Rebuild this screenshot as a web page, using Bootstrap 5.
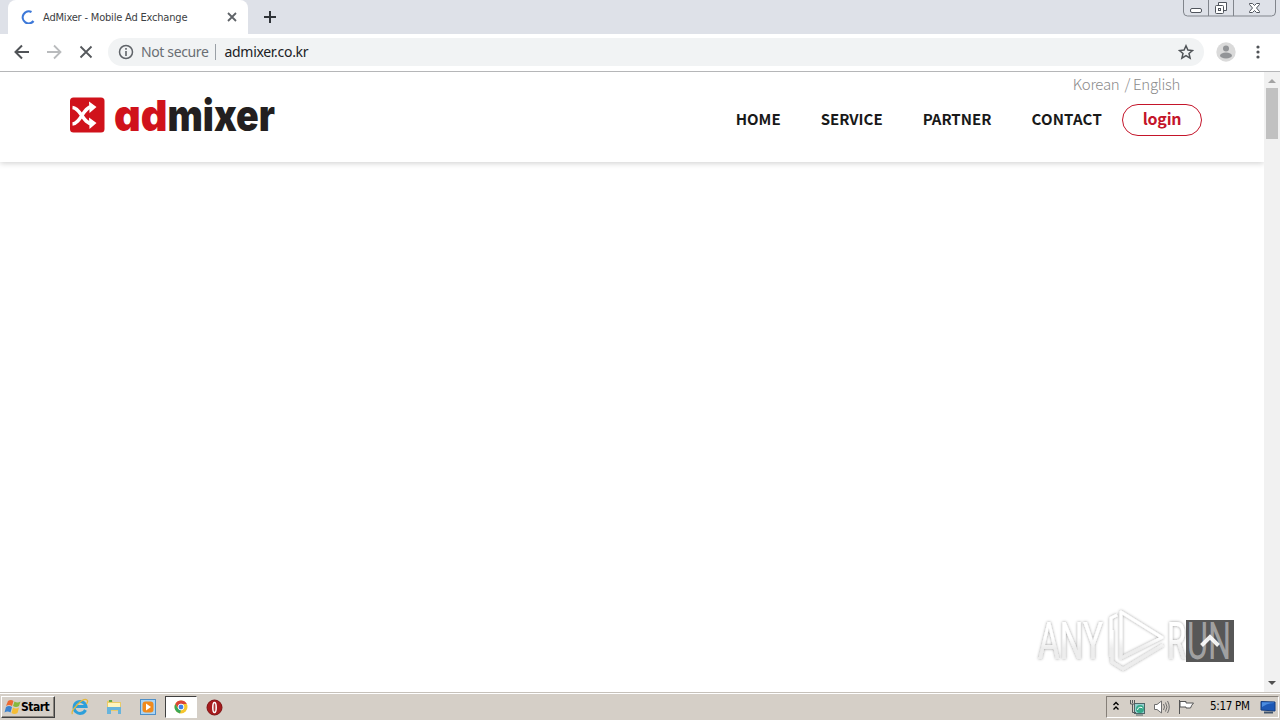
<!DOCTYPE html>
<html lang="en">
<head>
  <meta charset="UTF-8">
  <title>AdMixer - Mobile Ad Exchange</title>
  <meta name="viewport" content="width=device-width, initial-scale=1">
  <link href="https://cdn.jsdelivr.net/npm/bootstrap@5.3.3/dist/css/bootstrap.min.css" rel="stylesheet">
  <style>
    body { width: 1280px; height: 720px; overflow: hidden; background: #fff; font-family: "Noto Sans", sans-serif; line-height: 1; }
    svg { display: block; flex: none; }

    /* browser frame */
    .tab-strip { height: 34px; background: #dee1e8; }
    .browser-tab { width: 240px; height: 34px; margin-left: 8px; padding: 0 10px 0 13px; background: #fff; border-radius: 8px 8px 0 0; }
    .tab-title { font-family: "DejaVu Sans Condensed", "DejaVu Sans", sans-serif; font-stretch: condensed; font-size: 11px; letter-spacing: -.19px; color: #3c4043; margin-left: 8px; white-space: nowrap; }
    .new-tab { margin-left: 15px; }
    .win-buttons { margin-right: 4px; }
    .toolbar { height: 38px; border-bottom: 1px solid #b5b6b8; padding: 0 15px 2px 14px; }
    .nav-icon { margin-left: 16px; }
    .omnibox { width: 1096px; height: 28px; background: #f1f3f4; border-radius: 14px; margin-left: 14px; padding: 0 10px; font-size: 14px; }
    .not-secure { margin-left: 7px; color: #6a6e73; letter-spacing: -.37px; }
    .url-text { color: #202124; letter-spacing: -.3px; }
    .url-divider { width: 1px; height: 16px; background: #9aa0a6; margin: 0 8px 0 7px; }

    /* site */
    .viewport-row { height: 620px; }
    .site-header { height: 90px; padding: 0 62px 0 70px; background: #fff; box-shadow: 0 1px 6px rgba(0, 0, 0, .2); font-family: "Noto Sans CJK KR", sans-serif; }
    .site-header a { color: inherit; text-decoration: none; }
    .brand-logo { margin-top: 16px; }
    .lang-links { font-size: 15px; font-weight: 300; color: #8b8b8b; padding: 4px 22px 0 0; height: 32px; line-height: 16px; letter-spacing: -.3px; }
    .lang-links a:first-child { margin-right: 2px; }
    .main-menu { font-size: 15px; font-weight: 700; color: #191919; height: 32px; }
    .main-menu a { margin-right: 40px; padding-bottom: 4px; }
    .main-menu a:nth-child(4) { margin-right: 20px; letter-spacing: .2px; }
    .main-menu .login-btn { width: 80px; height: 32px; margin-right: 0; border: 1px solid #c4152a; border-radius: 16px; color: #c4152a; font-size: 16px; letter-spacing: -.2px; }
    .scroll-track { width: 16px; background: #f1f1f1; }
    .scroll-thumb { width: 12px; height: 51px; background: #c1c1c1; }
    .to-top { left: 1186px; top: 620px; width: 48px; height: 42px; background: #575757; }
    .watermark { left: 1030px; top: 600px; pointer-events: none; }

    /* taskbar */
    .taskbar { height: 28px; background: #d5cfc7; border-top: 1px solid #c6c1ba; box-shadow: inset 0 1px #fff; padding: 3px 1px 2px; font-family: "DejaVu Sans Condensed", "DejaVu Sans", sans-serif; color: #000; }
    .start-btn { width: 54px; height: 22px; padding: 0 0 0 2px; background: #d5cfc7; color: #000; border: 1px solid; border-color: #fff #404040 #404040 #fff; box-shadow: inset -1px -1px #8a857e; font-size: 12px; font-weight: 700; letter-spacing: -.5px; }
    .quick-icon { margin-left: 16px; }
    .task-active { width: 32px; height: 22px; margin: 0 9px 0 8px; background: #fff; border: 1px solid; border-color: #404040 #fff #fff #404040; }
    .tray { width: 173px; height: 22px; border: 1px solid; border-color: #857f78 #fff #fff #857f78; }
    .clock { font-size: 11.5px; letter-spacing: -.3px; margin: 0 10px 0 15px; white-space: nowrap; }
  </style>
</head>
<body>
  <div class="tab-strip d-flex">
    <div class="browser-tab d-flex align-items-center">
      <svg width="14" height="14" viewBox="0 0 14 14"><path d="M10.500 2A6 6 0 1 0 12.500 11" fill="none" stroke="#3c78d8" stroke-width="2.200"/></svg>
      <span class="tab-title">AdMixer - Mobile Ad Exchange</span>
      <svg class="ms-auto" width="12" height="12" viewBox="0 0 12 12"><path d="M2 2l8 8M10 2l-8 8" stroke="#5f6368" stroke-width="1.800"/></svg>
    </div>
    <svg class="new-tab align-self-center" width="14" height="14" viewBox="0 0 14 14"><path d="M7 1v12M1 7h12" stroke="#2f3338" stroke-width="2"/></svg>
    <svg class="win-buttons ms-auto" width="93" height="18" viewBox="0 0 93 18" fill="none" stroke="#81858c">
      <path d="M.5 0v12q0 4 4 4h84q4 0 4-4V0M25.500 0v16M50.500 0v16"/>
      <g stroke="#50555d">
        <rect x="7.500" y="8.500" width="11" height="4" rx="1.500" fill="#fff"/>
        <path d="M35.500 5V2.500h8v8H41" fill="#fff"/>
        <rect x="32.500" y="5.500" width="8" height="8" rx="1" fill="#fff"/>
        <rect x="35.500" y="8.500" width="2" height="2"/>
        <path d="M66.500 3.500h3l2 2 2-2h3v1l-3 3.500 3 3.500v1h-3l-2-2-2 2h-3v-1l3-3.500-3-3.500z" fill="#fff"/>
      </g>
    </svg>
  </div>

  <div class="toolbar d-flex align-items-center">
    <svg width="16" height="16" viewBox="0 0 16 16" fill="none" stroke="#505357" stroke-width="2"><path d="M15 8H2M8 1.500L1.500 8 8 14.500"/></svg>
    <svg class="nav-icon" width="16" height="16" viewBox="0 0 16 16" fill="none" stroke="#b9bbbd" stroke-width="1.800"><path d="M1 8h13M8 1.500L14.500 8 8 14.500"/></svg>
    <svg class="nav-icon" width="16" height="16" viewBox="0 0 16 16" fill="none" stroke="#55585c" stroke-width="1.800"><path d="M2.500 2.500l11 11M13.500 2.500l-11 11"/></svg>
    <div class="omnibox d-flex align-items-center">
      <svg width="16" height="16" viewBox="0 0 16 16"><circle cx="8" cy="8" r="6.500" fill="none" stroke="#5f6368" stroke-width="1.500"/><path d="M8 7v5M8 4v1.700" stroke="#5f6368" stroke-width="1.600"/></svg>
      <span class="not-secure">Not secure</span>
      <span class="url-divider"></span>
      <span class="url-text">admixer.co.kr</span>
      <svg class="ms-auto" width="16" height="16" viewBox="0 0 16 16"><path d="M8 1.800l1.900 4.300 4.600.4-3.500 3 1.100 4.600L8 11.700l-4.100 2.400L5 9.500l-3.500-3 4.600-.4z" fill="none" stroke="#505458" stroke-width="1.500"/></svg>
    </div>
    <svg style="margin-left:12px" width="20" height="20" viewBox="0 0 20 20"><circle cx="10" cy="10" r="9.700" fill="#dadada"/><circle cx="10" cy="6.500" r="3" fill="#929497"/><ellipse cx="10" cy="13.500" rx="6" ry="3" fill="#929497"/></svg>
    <svg style="margin-left:20px" width="4" height="14" viewBox="0 0 4 14" fill="#505357"><circle cx="2" cy="2" r="1.600"/><circle cx="2" cy="7" r="1.600"/><circle cx="2" cy="12" r="1.600"/></svg>
  </div>

  <div class="viewport-row d-flex">
    <main class="flex-grow-1 overflow-hidden">
      <header class="site-header d-flex justify-content-between">
        <a href="#" class="brand-logo">
          <svg width="212" height="58" viewBox="0 -6 212 58" font-family="Inter, sans-serif" font-size="43" font-weight="900" style="font-feature-settings:'cv11' 1">
            <rect x="0" y="3.500" width="34.500" height="35" rx="3.500" fill="#d0121b"/>
            <path d="M2.500 13.500C11 14 13 30 22 29.500M2.500 30C11 29.500 13 13 22 12.500" fill="none" stroke="#fff" stroke-width="3.400"/>
            <path d="M19 7.500l7.500 5.500-7 6M19 23.500l7.500 5.500-7 6" fill="#fff"/>
            <text x="44" y="37" textLength="53.500" lengthAdjust="spacingAndGlyphs" fill="#d0121b">ad</text>
            <text x="97.500" y="37" textLength="107.500" lengthAdjust="spacingAndGlyphs" fill="#231f20">mixer</text>
          </svg>
        </a>
        <div>
          <div class="lang-links text-end"><a href="#">Korean</a> / <a href="#">English</a></div>
          <nav class="main-menu d-flex align-items-center justify-content-end">
            <a href="#">HOME</a>
            <a href="#">SERVICE</a>
            <a href="#">PARTNER</a>
            <a href="#">CONTACT</a>
            <a href="#" class="login-btn d-flex align-items-center justify-content-center">login</a>
          </nav>
        </div>
      </header>
    </main>
    <div class="scroll-track d-flex flex-column align-items-center justify-content-between">
      <div>
        <svg class="mx-auto" width="12" height="16" viewBox="0 0 12 16"><path d="M2 11l4-4 4 4z" fill="#a3a3a3"/></svg>
        <div class="scroll-thumb"></div>
      </div>
      <svg width="12" height="16" viewBox="0 0 12 16"><path d="M2 5l4 4 4-4z" fill="#505050"/></svg>
    </div>
  </div>

  <footer class="taskbar d-flex align-items-center">
    <button class="start-btn d-flex align-items-center">
      <svg width="17" height="16" viewBox="0 0 17 16"><path d="M4 2q3-2 5.500 0L8 7q-3-2-6 0z" fill="#ed6a32"/><path d="M10.500 2.500q3 2 6 0L15 7q-3 2-6 0z" fill="#86b83c"/><path d="M2 8q3-2 6 0l-1.500 5.500q-3-2-6 0z" fill="#3c83cf"/><path d="M9 8.500q3 2 6 0L13.500 14q-3 2-6 0z" fill="#f5bd35"/></svg>
      <span>Start</span>
    </button>
    <svg class="quick-icon" width="18" height="18" viewBox="0 0 18 18" fill="none"><path d="M14.500 12A6 6 0 1 1 15 8.500H5" stroke="#2d9fda" stroke-width="3"/><path d="M1.500 16C-1 13 12-1 16 2q1.500 1-.5 4" stroke="#e5b83b" stroke-width="1.300"/></svg>
    <svg class="quick-icon" width="18" height="18" viewBox="0 0 18 18"><path d="M2 3l5-1 1 2h8v9H2z" fill="#e9cb68"/><path d="M3 5h12v4H3z" fill="#fff5bd"/><path d="M2 9h14v7h-3v-4H6v4H2z" fill="#67b4dc"/><path d="M4 3h3" stroke="#64a849" stroke-width="2"/></svg>
    <svg class="quick-icon" width="18" height="18" viewBox="0 0 18 18"><rect x="1.500" y="1.500" width="15" height="15" fill="#a9d4f5" stroke="#4e8fc7"/><rect x="3.500" y="3.500" width="11" height="11" rx="3" fill="#f08a1d"/><path d="M7 5.500v7l5-3.500z" fill="#fff"/></svg>
    <div class="task-active d-flex align-items-center justify-content-center">
      <svg width="14" height="14" viewBox="0 0 14 14"><circle cx="7" cy="7" r="6.500" fill="#f6c62e"/><path d="M1.300 4A6.500 6.500 0 0 1 12.800 4H7L4 8z" fill="#db4437"/><path d="M1.300 4L4 8.500 7 10l-1 3.400A6.500 6.500 0 0 1 1.300 4z" fill="#3aa757"/><circle cx="7" cy="7" r="2.900" fill="#3d7fe8" stroke="#fff"/></svg>
    </div>
    <svg width="17" height="17" viewBox="0 0 17 17"><circle cx="8.500" cy="8.500" r="7.500" fill="#a61b1d" stroke="#7d1012"/><ellipse cx="8.500" cy="8.500" rx="1.700" ry="5" fill="#b13a38" stroke="#fff" stroke-width="1.500"/></svg>
    <div class="tray d-flex align-items-center ms-auto">
      <svg style="margin-left:5px" width="8" height="12" viewBox="0 0 8 12" fill="none" stroke="#000" stroke-width="1.400"><path d="M1.500 4L4 1.500 6.500 4M1.500 8.500L4 6l2.500 2.500"/></svg>
      <svg style="margin-left:9px" width="17" height="17" viewBox="0 0 17 17"><rect x="5.500" y="4.500" width="10" height="10" fill="#94d0cf" stroke="#4d6668"/><circle cx="11" cy="10" r="4" fill="#35a889"/><path d="M8.500 11a3 3 0 0 1 5-2" stroke="#fff" fill="none"/><path d="M1.500 1v4h4V1M3.500 5v8.500H7M3.500 1v3" fill="none" stroke="#55595c"/><path d="M7 16h7" stroke="#4d6668"/></svg>
      <svg style="margin-left:7px" width="17" height="16" viewBox="0 0 17 16" fill="none" stroke="#6e6e6e"><path d="M1.500 5.500H4L8.500 2v12L4 10.500H1.500z" fill="#fff"/><path d="M10.500 5q2 3 0 6M12.500 3.500q3 4.500 0 9M14.500 2q3.500 6 0 12"/></svg>
      <svg style="margin-left:8px" width="17" height="16" viewBox="0 0 17 16" fill="#fff" stroke="#555"><path d="M1.500 1v14M2 2.500h6v1.500h7.500q-2 2-3 5H8V8H2z"/></svg>
      <span class="clock">5:17 PM</span>
      <svg width="16" height="15" viewBox="0 0 16 15"><path d="M1 1.500l14 .5v9L1 10z" fill="#1d58b5" stroke="#173f80"/><path d="M2 7q6-4 12-4v-.5L2 2.300z" fill="#4b8ce0"/><path d="M4 12.500h9" stroke="#40546c" stroke-width="2"/></svg>
    </div>
  </footer>

  <a href="#" class="to-top position-absolute d-flex align-items-center justify-content-center">
    <svg width="22" height="16" viewBox="0 0 22 16"><path d="M2.500 12.500L11 4l8.500 8.500" fill="none" stroke="#f1f1f1" stroke-width="4"/></svg>
  </a>
  <svg class="watermark position-absolute" width="214" height="84" viewBox="0 0 214 84">
    <defs>
      <filter id="soft" x="-20%" y="-20%" width="140%" height="140%"><feDropShadow dx="0" dy="0" stdDeviation="1.700" flood-color="#000" flood-opacity=".42"/></filter>
      <linearGradient id="fade" gradientUnits="userSpaceOnUse" x1="0" y1="20" x2="0" y2="64"><stop offset=".4" stop-color="#fff"/><stop offset=".65" stop-color="#ededed"/></linearGradient>
    </defs>
    <g filter="url(#soft)" fill="url(#fade)" font-family="Roboto, sans-serif" font-size="51">
      <text x="8" y="59" textLength="65" lengthAdjust="spacingAndGlyphs">ANY</text>
      <text x="137" y="59" textLength="19" lengthAdjust="spacingAndGlyphs">R</text>
      <g fill="none" stroke="url(#fade)" stroke-width="3" stroke-linejoin="round">
        <path d="M91 12v46l41-20.500z"/>
        <path d="M87 15l-6 3v39M82 30v32l11 7 40-24"/>
      </g>
    </g>
    <text x="157" y="59" textLength="44" lengthAdjust="spacingAndGlyphs" fill="#fff" fill-opacity=".45" font-family="Roboto, sans-serif" font-size="51">UN</text>
  </svg>

  <script src="https://cdn.jsdelivr.net/npm/bootstrap@5.3.3/dist/js/bootstrap.bundle.min.js"></script>
</body>
</html>
